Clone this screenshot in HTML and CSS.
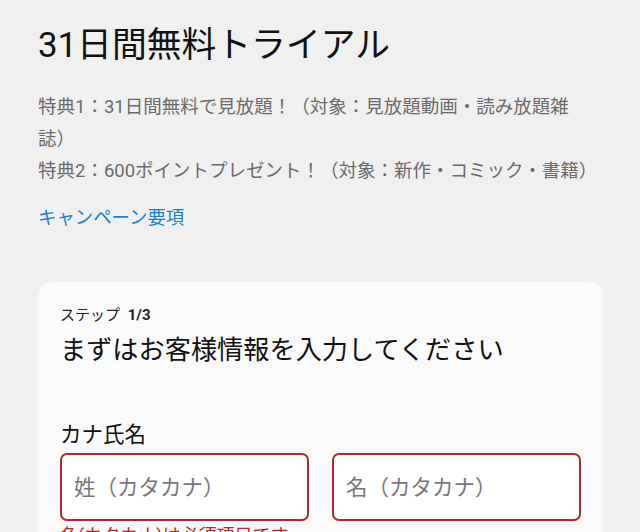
FILE: index.html
```html
<!DOCTYPE html>
<html lang="ja">
<head>
    <meta charset="UTF-8">
    <meta name="viewport" content="width=device-width, initial-scale=1.0">
    <title>31日間無料トライアル</title>
    <link rel="stylesheet" href="styles.css">
</head>
<body>

    <div class="page">
        <h1 class="trial-title">31日間無料トライアル</h1>
        <p class="benefits">
            特典1：31日間無料で見放題！（対象：見放題動画・読み放題雑誌）<br>
            特典2：600ポイントプレゼント！（対象：新作・コミック・書籍）
        </p>
        <a class="campaign-link" href="#">キャンペーン要項</a>

        <div class="form-card">
            <div class="step">ステップ <b>1/3</b></div>
            <h2 class="form-title">まずはお客様情報を入力してください</h2>

            <div class="field">
                <label class="field-label">カナ氏名</label>
                <div class="name-row">
                    <div class="name-col">
                        <input class="text-input is-error" type="text" placeholder="姓（カタカナ）">
                        <p class="error-msg">名(カタカナ)は必須項目です</p>
                    </div>
                    <div class="name-col">
                        <input class="text-input is-error" type="text" placeholder="名（カタカナ）">
                    </div>
                </div>
            </div>
        </div>
    </div>

</body>
</html>
```

FILE: styles.css
```css
/* ベース */
body {
    margin: 0;
    background-color: #f0f0f0;
    color: #1a1a1a;
    font-family: Roboto, "Noto Sans CJK JP", sans-serif;
}

.page {
    padding: 21px 37px 0 38px;
}

.trial-title {
    margin: 0;
    font-size: 34.8px;
    font-weight: 400;
    line-height: 48px;
    color: #111;
}

.benefits {
    margin: 22px 0 0;
    max-width: 556px;
    font-size: 18.5px;
    line-height: 32px;
    color: #6b6b6b;
}

.campaign-link {
    display: block;
    margin-top: 15px;
    font-size: 18.4px;
    line-height: 32px;
    color: #1a7fcf;
    text-decoration: none;
}

/* --- フォームカード --- */
.form-card {
    margin-top: 48px;
    background-color: #fafafa;
    border-radius: 14px;
    padding: 23px 22px 40px;
    min-height: 300px;
}

.step {
    font-size: 15px;
    line-height: 20px;
    color: #222;
}

.step b {
    margin-left: 4px;
    font-weight: 700;
}

.form-title {
    margin: 8px 0 0;
    font-size: 26.2px;
    font-weight: 400;
    line-height: 34px;
    color: #111;
}

.field {
    margin-top: 54px;
}

.field-label {
    display: block;
    font-size: 21.5px;
    line-height: 28px;
    color: #111;
}

.name-row {
    display: flex;
    gap: 23px;
    margin-top: 4px;
}

.name-col {
    flex: 1;
}

.text-input {
    box-sizing: border-box;
    width: 100%;
    height: 68px;
    padding: 0 12px;
    border: 2px solid #ccc;
    border-radius: 7px;
    background-color: #fff;
    font-family: Roboto, "Noto Sans CJK JP", sans-serif;
    font-size: 21.5px;
    color: #111;
    outline: none;
}

.text-input::placeholder {
    color: #777;
}

.text-input.is-error {
    border-color: #b2282d;
}

.error-msg {
    margin: 4px 0 0;
    font-size: 18px;
    line-height: 22px;
    color: #b2282d;
}
```
